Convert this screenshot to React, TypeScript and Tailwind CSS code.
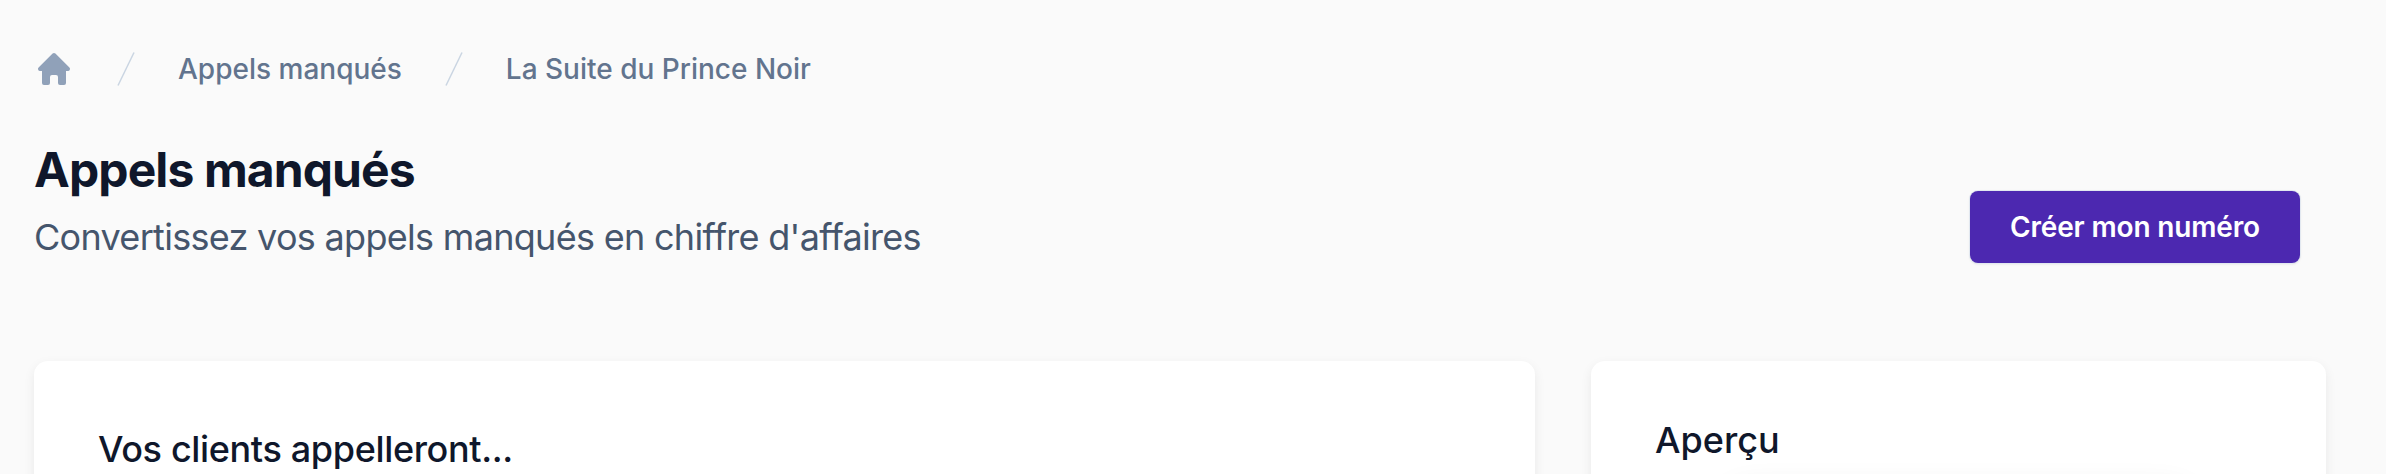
function HomeIcon() {
  return (
    <svg viewBox="0 0 20 20" fill="currentColor" className="w-10 h-10 shrink-0 text-slate-400">
      <path d="M9.293 2.293a1 1 0 011.414 0l7 7A1 1 0 0117 11h-1v6a1 1 0 01-1 1h-2a1 1 0 01-1-1v-3a1 1 0 00-1-1H9a1 1 0 00-1 1v3a1 1 0 01-1 1H5a1 1 0 01-1-1v-6H3a1 1 0 01-.707-1.707l7-7z" />
    </svg>
  );
}

function Slash() {
  return (
    <svg viewBox="0 0 18 34" fill="none" className="w-[18px] h-[34px] shrink-0 text-slate-300">
      <path d="M17 0.5L1 33.5" stroke="currentColor" strokeWidth="1.5" />
    </svg>
  );
}

export default function App() {
  return (
    <div className="h-[474px] overflow-hidden bg-[#fafafa] font-['Inter',sans-serif] pl-[34px] pr-[60px] pt-[49px]">
      {/* breadcrumb */}
      <nav className="flex items-center h-10 text-[28px] font-medium text-slate-500">
        <HomeIcon />
        <div className="ml-[43px]"><Slash /></div>
        <span className="ml-[43px]">Appels manqués</span>
        <div className="ml-[43px]"><Slash /></div>
        <span className="ml-[43px]">La Suite du Prince Noir</span>
      </nav>

      {/* titre */}
      <div className="flex items-end justify-between mt-[51px]">
        <div className="pb-[3px]">
          <h1 className="text-[48px] leading-[60px] font-bold tracking-[-0.9px] text-slate-900">Appels manqués</h1>
          <p className="mt-[10px] text-[36px] leading-[54px] tracking-[-0.7px] text-slate-600">Convertissez vos appels manqués en chiffre d'affaires</p>
        </div>
        <button className="mr-[26px] mb-1 h-[72px] w-[330px] rounded-lg bg-[#4c28b0] text-[28px] font-semibold tracking-[-0.15px] text-white shadow-sm ring-1 ring-slate-200">
          Créer mon numéro
        </button>
      </div>

      {/* cartes */}
      <div className="flex gap-14 mt-[94px]">
        <div className="w-[1501px] h-[300px] rounded-[14px] bg-white shadow-[0_4px_12px_rgba(0,0,0,0.07)] px-16 pt-[64px]">
          <h2 className="text-[36px] leading-[48px] font-medium tracking-[-0.35px] text-slate-900">Vos clients appelleront...</h2>
        </div>
        <div className="w-[735px] h-[300px] rounded-[14px] bg-white shadow-[0_4px_12px_rgba(0,0,0,0.07)] px-16 pt-[55px]">
          <h2 className="text-[36px] leading-[48px] font-medium text-slate-900">Aperçu</h2>
          {/* aperçu du téléphone, coupé par le bas de la page */}
          <div className="mt-6 mx-auto w-[490px] h-[200px] rounded-[40px] bg-white shadow-[0_0_30px_rgba(0,0,0,0.09)]" />
        </div>
      </div>
    </div>
  );
}
